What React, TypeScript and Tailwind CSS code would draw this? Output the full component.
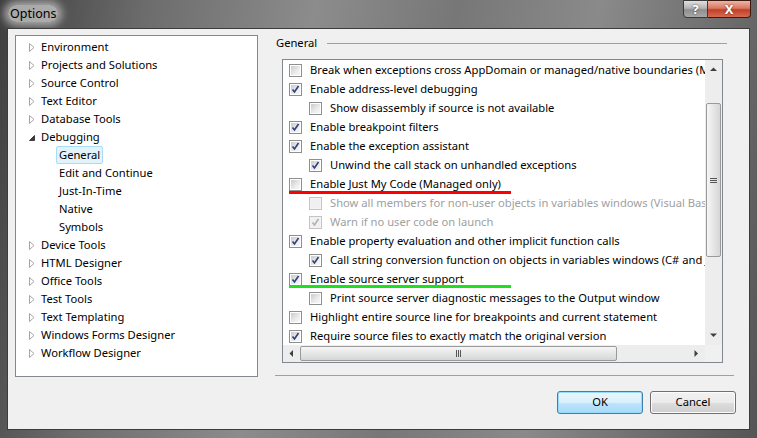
import type { FC } from "react";

type TreeItem = { label: string; arrow?: "closed" | "open"; child?: boolean; selected?: boolean };

const tree: TreeItem[] = [
  { label: "Environment", arrow: "closed" },
  { label: "Projects and Solutions", arrow: "closed" },
  { label: "Source Control", arrow: "closed" },
  { label: "Text Editor", arrow: "closed" },
  { label: "Database Tools", arrow: "closed" },
  { label: "Debugging", arrow: "open" },
  { label: "General", child: true, selected: true },
  { label: "Edit and Continue", child: true },
  { label: "Just-In-Time", child: true },
  { label: "Native", child: true },
  { label: "Symbols", child: true },
  { label: "Device Tools", arrow: "closed" },
  { label: "HTML Designer", arrow: "closed" },
  { label: "Office Tools", arrow: "closed" },
  { label: "Test Tools", arrow: "closed" },
  { label: "Text Templating", arrow: "closed" },
  { label: "Windows Forms Designer", arrow: "closed" },
  { label: "Workflow Designer", arrow: "closed" },
];

type Option = {
  label: string;
  checked?: boolean;
  indent?: boolean;
  disabled?: boolean;
  mark?: "red" | "green";
};

const options: Option[] = [
  { label: "Break when exceptions cross AppDomain or managed/native boundaries (Managed only)" },
  { label: "Enable address-level debugging", checked: true },
  { label: "Show disassembly if source is not available", indent: true },
  { label: "Enable breakpoint filters", checked: true },
  { label: "Enable the exception assistant", checked: true },
  { label: "Unwind the call stack on unhandled exceptions", checked: true, indent: true },
  { label: "Enable Just My Code (Managed only)", mark: "red" },
  { label: "Show all members for non-user objects in variables windows (Visual Basic only)", indent: true, disabled: true },
  { label: "Warn if no user code on launch", indent: true, disabled: true, checked: true },
  { label: "Enable property evaluation and other implicit function calls", checked: true },
  { label: "Call string conversion function on objects in variables windows (C# and JavaScript only)", indent: true, checked: true },
  { label: "Enable source server support", checked: true, mark: "green" },
  { label: "Print source server diagnostic messages to the Output window", indent: true },
  { label: "Highlight entire source line for breakpoints and current statement" },
  { label: "Require source files to exactly match the original version", checked: true },
];

const Checkbox: FC<{ checked?: boolean; disabled?: boolean }> = ({ checked, disabled }) => (
  <div
    className={`flex h-[13px] w-[13px] shrink-0 items-center justify-center border ${
      disabled ? "border-[#c4c4c4] bg-[#f4f4f4]" : "border-[#8e8f8f] bg-white"
    }`}
  >
    <div
      className={`relative h-[9px] w-[9px] ${
        disabled
          ? "bg-[#f0f0f0]"
          : "bg-[linear-gradient(135deg,#cbcbcb,#ececec_60%,#f8f8f8)]"
      }`}
    >
      {checked && (
        <svg width="9" height="9" viewBox="0 0 9 9" className="absolute inset-0">
          <path
            d="M1.5 4.5 L3.5 7 L7.5 1"
            fill="none"
            stroke={disabled ? "#b0b0b0" : "#2f3f7a"}
            strokeWidth="1.6"
          />
        </svg>
      )}
    </div>
  </div>
);

const TreeArrow: FC<{ kind?: "closed" | "open" }> = ({ kind }) => {
  if (kind === "closed")
    return (
      <svg width="6" height="9" viewBox="0 0 6 9">
        <path d="M0.5 0.5 L5 4.5 L0.5 8.5 Z" fill="#fff" stroke="#a5a5a5" strokeWidth="1" />
      </svg>
    );
  if (kind === "open")
    return (
      <svg width="6" height="9" viewBox="0 0 6 9">
        <path d="M0.5 7.5 L5.5 7.5 L5.5 2.5 Z" fill="#3c3c3c" stroke="#3c3c3c" strokeWidth="1" />
      </svg>
    );
  return null;
};

const Tri: FC<{ dir: "up" | "down" | "left" | "right" }> = ({ dir }) => {
  const d = {
    up: "M0 4 L3.5 0.5 L7 4 Z",
    down: "M0 0.5 L7 0.5 L3.5 4 Z",
    left: "M4 0 L0.5 3.5 L4 7 Z",
    right: "M0.5 0 L4 3.5 L0.5 7 Z",
  }[dir];
  const vertical = dir === "up" || dir === "down";
  return (
    <svg width={vertical ? 7 : 5} height={vertical ? 5 : 7} viewBox={vertical ? "0 0 7 5" : "0 0 5 7"}>
      <path d={d} fill="#404040" />
    </svg>
  );
};

export default function App() {
  return (
    <div className="flex h-[438px] w-[757px] flex-col bg-[linear-gradient(100deg,#3e3e3e_0%,#6d6d6d_18%,#8c8c8c_38%,#777_55%,#8a8a8a_72%,#555_100%)] px-[7px] pb-[8px] font-['Noto_Sans',sans-serif] text-[11.2px] text-black">
      {/* Title bar */}
      <div className="flex h-[28px] items-start justify-between">
        <div className="mt-[5px] ml-[1px] rounded-full bg-[#d4d4d4]/70 px-[2px] text-[12.5px] leading-[17px] shadow-[0_0_8px_4px_rgba(212,212,212,0.7)]">
          Options
        </div>
        <div className="mr-[-1px] flex">
          <div className="flex h-[18px] w-[25px] items-center justify-center rounded-bl-[4px] border border-[#3a3a3a] bg-[linear-gradient(#e0e0e0,#b4b4b4_45%,#8e8e8e_55%,#a8a8a8)] text-[13px] leading-none font-bold text-white [text-shadow:0_0_2px_#333]">
            ?
          </div>
          <div className="flex h-[18px] w-[43px] items-center justify-center rounded-br-[4px] border border-l-0 border-[#3a1a14] bg-[linear-gradient(#eeb4a4,#d87862_45%,#c0402a_55%,#d86a50)] text-[13px] leading-none font-bold text-white [text-shadow:0_0_2px_#522]">
            X
          </div>
        </div>
      </div>

      {/* Client area */}
      <div className="flex flex-1 items-start border border-[#3c3c3c] bg-[#f0f0f0]">
        {/* Tree */}
        <div className="mt-[6px] ml-[7px] h-[342px] w-[243px] border border-[#828790] bg-white pt-[2px]">
          {tree.map(item => (
            <div key={item.label} className="flex h-[18px] items-center whitespace-nowrap">
              {item.child ? (
                <>
                  <div className="w-[40px] shrink-0" />
                  <span
                    className={`rounded-[2px] border px-[2px] leading-[16px] ${
                      item.selected ? "border-[#a6dcf6] bg-[#e3f3fc]" : "border-transparent"
                    }`}
                  >
                    {item.label}
                  </span>
                </>
              ) : (
                <>
                  <div className="flex w-[25px] shrink-0 items-center pl-[13px]">
                    <TreeArrow kind={item.arrow} />
                  </div>
                  <span className="leading-[16px]">{item.label}</span>
                </>
              )}
            </div>
          ))}
        </div>

        {/* Right column */}
        <div className="mt-[6px] ml-[17px] flex w-[462px] flex-col">
          <div className="flex h-[17px] items-center">
            <span className="pl-[1px]">General</span>
            <div className="mr-[10px] ml-[10px] h-px flex-1 bg-[#a0a0a0]" />
          </div>

          {/* Option list */}
          <div className="mt-[7px] ml-[7px] flex h-[304px] w-[441px] flex-col border border-[#828790] bg-white">
            <div className="flex h-[285px]">
              <div className="w-[422px] overflow-hidden pt-[1px]">
                {options.map(opt => (
                  <div
                    key={opt.label}
                    className={`relative flex h-[19px] items-center whitespace-nowrap ${
                      opt.indent ? "pl-[26px]" : "pl-[6px]"
                    } ${opt.disabled ? "text-[#a0a0a0]" : ""}`}
                  >
                    <Checkbox checked={opt.checked} disabled={opt.disabled} />
                    <span className="ml-[8px]">{opt.label}</span>
                    {opt.mark === "red" && (
                      <div className="absolute bottom-[0px] left-[6px] h-[3px] w-[222px] bg-[#f00]" />
                    )}
                    {opt.mark === "green" && (
                      <div className="absolute bottom-[1px] left-[6px] h-[3px] w-[222px] bg-[#1fe01f]" />
                    )}
                  </div>
                ))}
              </div>
              {/* Vertical scrollbar */}
              <div className="flex w-[17px] flex-col bg-[#ededed]">
                <div className="flex h-[17px] items-center justify-center pt-[2px]">
                  <Tri dir="up" />
                </div>
                <div className="mt-[26px] ml-[1px] flex h-[154px] w-[15px] flex-col items-center justify-center gap-[1px] rounded-[2px] border border-[#9a9a9a] bg-[linear-gradient(90deg,#f6f6f6,#e6e6e6_50%,#d6d6d6)]">
                  <div className="h-px w-[7px] bg-[#555]" />
                  <div className="h-px w-[7px] bg-[#555]" />
                  <div className="h-px w-[7px] bg-[#555]" />
                </div>
                <div className="flex-1" />
                <div className="flex h-[17px] items-center justify-center pb-[2px]">
                  <Tri dir="down" />
                </div>
              </div>
            </div>
            {/* Horizontal scrollbar */}
            <div className="flex h-[17px]">
              <div className="flex w-[422px] items-center bg-[#ededed]">
                <div className="flex w-[17px] items-center justify-center">
                  <Tri dir="left" />
                </div>
                <div className="flex h-[15px] w-[317px] items-center justify-center gap-[1px] rounded-[2px] border border-[#9a9a9a] bg-[linear-gradient(#f6f6f6,#e6e6e6_50%,#d6d6d6)]">
                  <div className="h-[7px] w-px bg-[#555]" />
                  <div className="h-[7px] w-px bg-[#555]" />
                  <div className="h-[7px] w-px bg-[#555]" />
                </div>
                <div className="flex-1" />
                <div className="flex w-[17px] items-center justify-center">
                  <Tri dir="right" />
                </div>
              </div>
              <div className="w-[17px] bg-[#f0f0f0]" />
            </div>
          </div>

          <div className="mt-[12px] h-px w-[459px] bg-[#a0a0a0]" />

          {/* Buttons */}
          <div className="mt-[15px] flex justify-end gap-[7px] pr-[1px]">
            <button className="flex h-[23px] w-[86px] items-center justify-center rounded-[3px] border border-[#3c7fb1] bg-[linear-gradient(#eaf6fd,#d9f0fc_50%,#bee6fd_50%,#a7d9f5)] shadow-[inset_0_0_0_1px_#94dbfd]">
              OK
            </button>
            <button className="flex h-[23px] w-[86px] items-center justify-center rounded-[3px] border border-[#707070] bg-[linear-gradient(#f2f2f2,#ebebeb_50%,#dddddd_50%,#cfcfcf)] shadow-[inset_0_0_0_1px_#fcfcfc]">
              Cancel
            </button>
          </div>
        </div>
      </div>
    </div>
  );
}
